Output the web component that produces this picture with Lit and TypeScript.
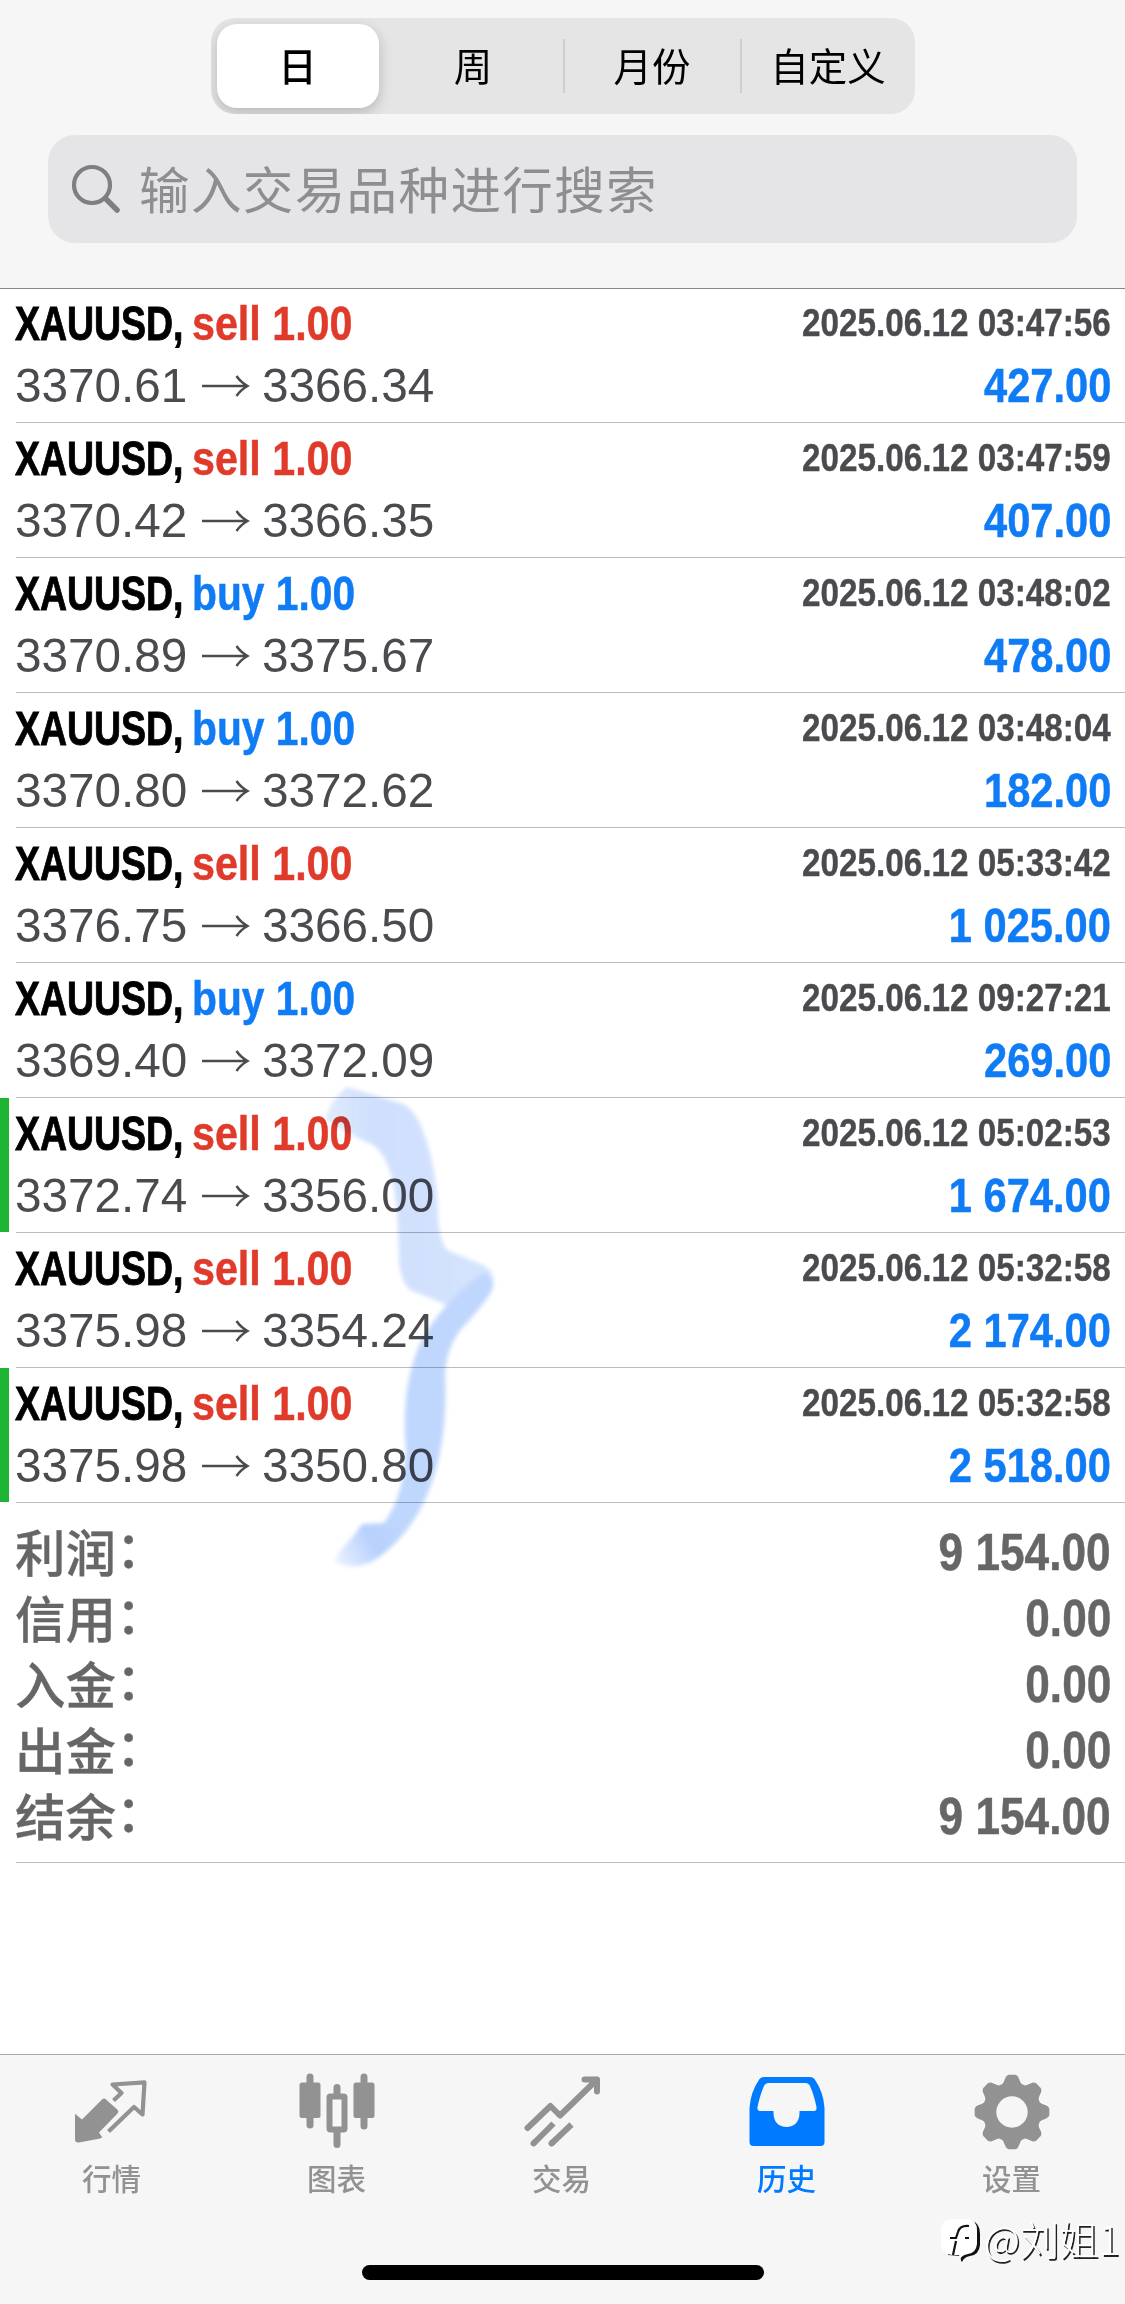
import { LitElement, html, css, svg } from "lit";
import { customElement, property } from "lit/decorators.js";
import { classMap } from "lit/directives/class-map.js";

type Side = "sell" | "buy";

interface Deal {
  side: Side;
  open: string;
  close: string;
  time: string;
  profit: string;
  marked?: boolean;
}

const DEALS: Deal[] = [
  { side: "sell", open: "3370.61", close: "3366.34", time: "2025.06.12 03:47:56", profit: "427.00" },
  { side: "sell", open: "3370.42", close: "3366.35", time: "2025.06.12 03:47:59", profit: "407.00" },
  { side: "buy", open: "3370.89", close: "3375.67", time: "2025.06.12 03:48:02", profit: "478.00" },
  { side: "buy", open: "3370.80", close: "3372.62", time: "2025.06.12 03:48:04", profit: "182.00" },
  { side: "sell", open: "3376.75", close: "3366.50", time: "2025.06.12 05:33:42", profit: "1 025.00" },
  { side: "buy", open: "3369.40", close: "3372.09", time: "2025.06.12 09:27:21", profit: "269.00" },
  { side: "sell", open: "3372.74", close: "3356.00", time: "2025.06.12 05:02:53", profit: "1 674.00", marked: true },
  { side: "sell", open: "3375.98", close: "3354.24", time: "2025.06.12 05:32:58", profit: "2 174.00" },
  { side: "sell", open: "3375.98", close: "3350.80", time: "2025.06.12 05:32:58", profit: "2 518.00", marked: true },
];

const TOTALS: [string, string][] = [
  ["利润", "9 154.00"],
  ["信用", "0.00"],
  ["入金", "0.00"],
  ["出金", "0.00"],
  ["结余", "9 154.00"],
];

const SEGMENTS = ["日", "周", "月份", "自定义"];

@customElement("deal-row")
class DealRow extends LitElement {
  @property({ attribute: false }) deal!: Deal;

  static styles = css`
    :host { display: block; }
    .row {
      box-sizing: border-box;
      height: 135px;
      display: flex;
      background: #fff;
    }
    .bar { width: 9px; height: 134px; }
    .marked { background: #1eb433; }
    .body {
      flex: 1;
      margin-left: 7px;
      padding: 1px 14px 0 0;
      display: flex;
      justify-content: space-between;
      border-bottom: 1px solid #bcbcbe;
      font-family: "Liberation Sans", Arial, sans-serif;
      white-space: nowrap;
    }
    .left, .right { display: flex; flex-direction: column; }
    .right { align-items: flex-end; }
    .title {
      display: flex;
      height: 66px;
      line-height: 68px;
      margin-left: -1px;
      font-size: 48.5px;
      font-weight: 700;
    }
    .symbol { width: 177px; color: #000; }
    .symbol span { display: inline-block; transform: scaleX(0.772); transform-origin: 0 50%; -webkit-text-stroke: 0.9px #000; }
    .side span { display: inline-block; transform-origin: 0 50%; -webkit-text-stroke: 0.5px currentColor; }
    .sell span { transform: scaleX(0.85); }
    .buy span { transform: scaleX(0.84); }
    .sell { color: #e03a2b; }
    .buy { color: #0f7bf5; }
    .prices {
      display: flex;
      align-items: center;
      height: 61px;
      margin-left: -1px;
      line-height: 61px;
      font-size: 47.7px;
      color: #4b4b4f;
    }
    .open { width: 187px; }
    .arrow { width: 48px; height: 24px; margin: 0 12px 0 0; }
    .time {
      height: 66px;
      line-height: 66px;
      font-size: 39.5px;
      font-weight: 700;
      color: #4b4b4f;
      -webkit-text-stroke: 0.4px currentColor;
      transform: scaleX(0.842);
      transform-origin: 100% 50%;
    }
    .profit {
      height: 61px;
      line-height: 61px;
      font-size: 48.5px;
      font-weight: 700;
      color: #0f7bf5;
      -webkit-text-stroke: 0.5px currentColor;
      transform: scaleX(0.858);
      transform-origin: 100% 50%;
    }
  `;

  render() {
    const d = this.deal;
    return html`
      <div class="row">
        <div class=${classMap({ bar: true, marked: !!d.marked })}></div>
        <div class="body">
          <div class="left">
            <div class="title">
              <div class="symbol"><span>XAUUSD,</span></div>
              <div class="side ${d.side}"><span>${d.side} 1.00</span></div>
            </div>
            <div class="prices">
              <div class="open">${d.open}</div>
              <svg class="arrow" viewBox="0 0 48 24" fill="none" stroke="#4b4b4f" stroke-width="2.5">
                <path d="M0 12H45M34.5 2Q38.500 8 45.500 12Q38.500 16 34.500 22" />
              </svg>
              <div>${d.close}</div>
            </div>
          </div>
          <div class="right">
            <div class="time">${d.time}</div>
            <div class="profit">${d.profit}</div>
          </div>
        </div>
      </div>
    `;
  }
}

const gearPath = (() => {
  const pts: string[] = [];
  const at = (r: number, deg: number) => {
    const a = (deg * Math.PI) / 180;
    return `${(40 + r * Math.sin(a)).toFixed(2)} ${(40 - r * Math.cos(a)).toFixed(2)}`;
  };
  for (let i = 0; i < 8; i++) {
    const c = i * 45;
    pts.push(`${i ? "L" : "M"}${at(29.5, c - 19)}`);
    pts.push(`Q${at(31, c - 15)} ${at(34, c - 12)}`);
    pts.push(`Q${at(37.3, c - 9)} ${at(37.5, c - 5)}`);
    pts.push(`L${at(37.5, c + 5)}`);
    pts.push(`Q${at(37.3, c + 9)} ${at(34, c + 12)}`);
    pts.push(`Q${at(31, c + 15)} ${at(29.5, c + 19)}`);
  }
  return pts.join("") + "ZM40 24.3A15.7 15.7 0 1 0 40 55.7A15.7 15.7 0 1 0 40 24.3Z";
})();

const TABS = [
  {
    label: "行情",
    icon: svg`
      <path fill="currentColor" d="M3 41.700L10 47.500L30 27.500Q32 25.500 34 27.500L45.800 38Q47 39.700 45.500 41.500L27 60.500L30.300 65.500Q29 66.500 27 66.700L7 70.500Q3 71 3 67Z" />
      <path fill="none" stroke="currentColor" stroke-width="4.200" stroke-linejoin="round" d="M41.500 28.500L49.500 21L40.500 12.500L72.500 10.300L70.500 42.500L62 35L36.500 59.500" />`,
  },
  {
    label: "图表",
    icon: svg`
      <g fill="currentColor">
        <rect x="9.500" y="1.500" width="7" height="55" rx="3.500" />
        <rect x="2.500" y="10.500" width="21" height="35.500" rx="2.500" />
        <rect x="63.500" y="1.500" width="7" height="56" rx="3.500" />
        <rect x="56.500" y="10.500" width="21" height="35.500" rx="2.500" />
        <rect x="36.500" y="12" width="7" height="64" rx="3.500" />
      </g>
      <rect x="32.500" y="24.500" width="15" height="33" rx="1" fill="#f7f7f7" stroke="currentColor" stroke-width="6" />`,
  },
  {
    label: "交易",
    icon: svg`
      <g fill="none" stroke="currentColor" stroke-width="6" stroke-linecap="round" stroke-linejoin="round">
        <path d="M5.500 56L28.500 34L38 43.500L75 7.500M62.500 7.500H75V19.500" />
        <path stroke-linecap="butt" d="M11 72L31.500 51.500M29 72L49.500 52.500" />
        <path d="M11.500 71.500L12.500 70.500M29.500 71.500L30.500 70.500" />
      </g>`,
  },
  {
    label: "历史",
    icon: svg`
      <path fill="currentColor" fill-rule="evenodd" d="M17 5H63Q66 5 67.500 7Q76.500 20 77.500 36V70Q77.500 74 73.500 74H6.500Q2.500 74 2.500 70V36Q3.500 20 12.500 7Q14 5 17 5ZM21.500 11Q18.500 11 17 14Q13 23 10.500 35Q10 39 13 39H26.500V41C26.500 50 32 55 39.500 55S52.500 50 52.500 41V39H67Q70 39 69.500 35Q67 23 63 14Q61.500 11 58.500 11Z" />`,
  },
  { label: "设置", icon: svg`<path fill="currentColor" fill-rule="evenodd" d=${gearPath} />` },
];

@customElement("app-root")
class AppRoot extends LitElement {
  static styles = css`
    :host {
      display: flex;
      flex-direction: column;
      position: relative;
      width: 1125px;
      height: 2304px;
      overflow: hidden;
      background: #fff;
      font-family: "Liberation Sans", "Noto Sans CJK SC", sans-serif;
    }
    .header {
      box-sizing: border-box;
      height: 289px;
      margin-bottom: -1px;
      padding-top: 18px;
      display: flex;
      flex-direction: column;
      align-items: center;
      gap: 21px;
      background: #f6f6f6;
      border-bottom: 1px solid #88888a;
      position: relative;
    }
    .segments {
      box-sizing: border-box;
      width: 704px;
      height: 96px;
      padding: 6px 0 6px 6px;
      display: grid;
      grid-template-columns: 162px 184px 177px 1fr;
      border-radius: 24px;
      background: #e5e5e5;
      overflow: hidden;
    }
    .segment {
      display: flex;
      align-items: center;
      justify-content: center;
      font: 400 38.5px/84px "Noto Sans CJK SC", sans-serif;
      color: #000;
    }
    .segment span { transform: translateY(-2px); }
    .active {
      border-radius: 20px;
      background: #fff;
      font-weight: 500;
      box-shadow: 0 5px 14px rgba(0, 0, 0, 0.2);
    }
    .segment:nth-child(2) { padding-left: 5px; }
    .divided::before {
      content: "";
      width: 2px;
      height: 54px;
      margin-right: auto;
      background: #cfcfd1;
    }
    .divided span { margin-right: auto; }
    .search {
      box-sizing: border-box;
      width: 1029px;
      height: 108px;
      padding-left: 23px;
      display: flex;
      align-items: center;
      border-radius: 27px;
      background: #e5e5e7;
      color: #8e8e91;
      font: 400 50.5px/108px "Noto Sans CJK SC", sans-serif;
      letter-spacing: 1.4px;
    }
    .search span { transform: translateY(-2px); }
    .lens { width: 50px; height: 50px; margin-right: 18px; color: #7f7f82; }
    .totals {
      height: 360px;
      box-sizing: border-box;
      margin-left: 16px;
      padding: 16px 14px 0 0;
      border-bottom: 1px solid #bcbcbe;
      color: #666;
    }
    .total { display: flex; justify-content: space-between; height: 66px; font-weight: 700; line-height: 66px; }
    .name { font: 500 50.5px/66px "Noto Sans CJK SC", sans-serif; display: flex; margin-left: -1px; transform: translateY(-2px); -webkit-text-stroke: 0.3px #666; }
    .colon { transform: translateY(-4px); }
    .sum {
      font-size: 51px;
      line-height: 66px;
      -webkit-text-stroke: 0.5px #666;
      transform: translateY(1px) scaleX(0.866);
      transform-origin: 100% 50%;
    }
    .tabs {
      box-sizing: border-box;
      height: 250px;
      margin-top: auto;
      padding-top: 17px;
      display: grid;
      grid-template-columns: repeat(5, 1fr);
      align-items: start;
      background: #f6f6f6;
      border-top: 1px solid #a8a8aa;
    }
    .tab {
      display: flex;
      flex-direction: column;
      align-items: center;
      margin-left: -2px;
      color: #929292;
      font: 500 29.5px/44px "Noto Sans CJK SC", sans-serif;
    }
    .tab svg { width: 80px; height: 80px; margin-bottom: 3px; }
    .current { color: #007aff; }
    .home {
      position: absolute;
      left: 362px;
      bottom: 24px;
      width: 402px;
      height: 15px;
      border-radius: 8px;
      background: #000;
    }
    .brush { position: absolute; left: 320px; top: 1070px; width: 190px; height: 510px; mix-blend-mode: multiply; }
    .watermark {
      position: absolute;
      right: 5px;
      bottom: 42px;
      display: flex;
      align-items: center;
      color: #fff;
      font: 300 39.5px/48px "Noto Sans CJK SC", sans-serif;
      text-shadow: 1.5px 1.5px 0.5px #222;
    }
    .watermark svg { width: 44px; height: 48px; transform: translateY(4px); }
  `;

  render() {
    return html`
      <header class="header">
        <div class="segments">
          ${SEGMENTS.map(
            (s, i) => html`<div class=${classMap({ segment: true, active: i === 0, divided: i > 1 })}><span>${s}</span></div>`
          )}
        </div>
        <div class="search">
          <svg class="lens" viewBox="0 0 50 50" fill="none" stroke="currentColor" stroke-linecap="round">
            <circle cx="21" cy="21" r="18" stroke-width="4.2" />
            <path stroke-width="5.5" d="M34.5 34.5L46 46" />
          </svg>
          <span>输入交易品种进行搜索</span>
        </div>
      </header>
      <main>
        ${DEALS.map((d) => html`<deal-row .deal=${d}></deal-row>`)}
        <div class="totals">
          ${TOTALS.map(
            ([name, sum]) => html`
              <div class="total">
                <div class="name"><span>${name}</span><span class="colon">：</span></div>
                <div class="sum">${sum}</div>
              </div>`
          )}
        </div>
      </main>
      <nav class="tabs">
        ${TABS.map(
          (t, i) => html`
            <div class=${classMap({ tab: true, current: i === 3 })}>
              <svg viewBox="0 0 80 80">${t.icon}</svg>
              <span>${t.label}</span>
            </div>`
        )}
      </nav>
      <svg class="brush" viewBox="320 1070 190 510">
        <defs>
          <filter id="soft" x="-10%" y="-10%" width="120%" height="120%"><feGaussianBlur stdDeviation="2" /></filter>
          <linearGradient id="head" x1="0" y1="0" x2="1" y2="0">
            <stop offset="0" stop-color="#c4d8fb" stop-opacity="0.5" />
            <stop offset="0.3" stop-color="#cfdffd" />
            <stop offset="1" stop-color="#d5e4fd" />
          </linearGradient>
          <linearGradient id="tail" gradientUnits="userSpaceOnUse" x1="335" y1="1560" x2="400" y2="1520">
            <stop offset="0" stop-color="#b7d0fd" stop-opacity="0.3" />
            <stop offset="0.55" stop-color="#b7d0fd" />
            <stop offset="1" stop-color="#c0d7fd" />
          </linearGradient>
        </defs>
        <g filter="url(#soft)">
          <path fill="url(#head)" d="M347 1087L403 1104Q414 1110 421 1126Q437 1165 438 1215Q439 1240 447 1250L483 1265Q496 1272 493 1285L450 1306L410 1290Q400 1280 399 1260Q398 1190 389 1168Q380 1145 366 1142L325 1120Q330 1100 347 1087Z" />
          <path fill="url(#tail)" d="M484 1272Q496 1280 492 1290Q484 1305 462 1328Q446 1348 445 1375Q448 1440 430 1488Q412 1535 375 1560Q355 1571 336 1563Q334 1556 352 1538L362 1524L384 1523Q404 1495 406 1450Q400 1380 424 1336Q445 1300 484 1272Z" />
        </g>
      </svg>
      <div class="watermark">
        <svg viewBox="0 0 44 48">
          <path fill="#111" d="M12 3H32Q40 5 40 16V27Q39 37 30 38Q24 39 22 44Q20 42 21 38L8 37Z" />
          <path fill="#fff" d="M12 1H28Q37 2 37 12V26Q36 35 28 36Q22 37 20 41L19 37H12Q1 36 1 26V12Q2 2 12 1Z" />
          <path fill="none" stroke="#111" stroke-width="2.2" d="M29 8Q20 7 18 14L16 20H10M16 23L13 37M25 20H29" />
        </svg>
        <span>@刘姐1</span>
      </div>
      <div class="home"></div>
    `;
  }
}
